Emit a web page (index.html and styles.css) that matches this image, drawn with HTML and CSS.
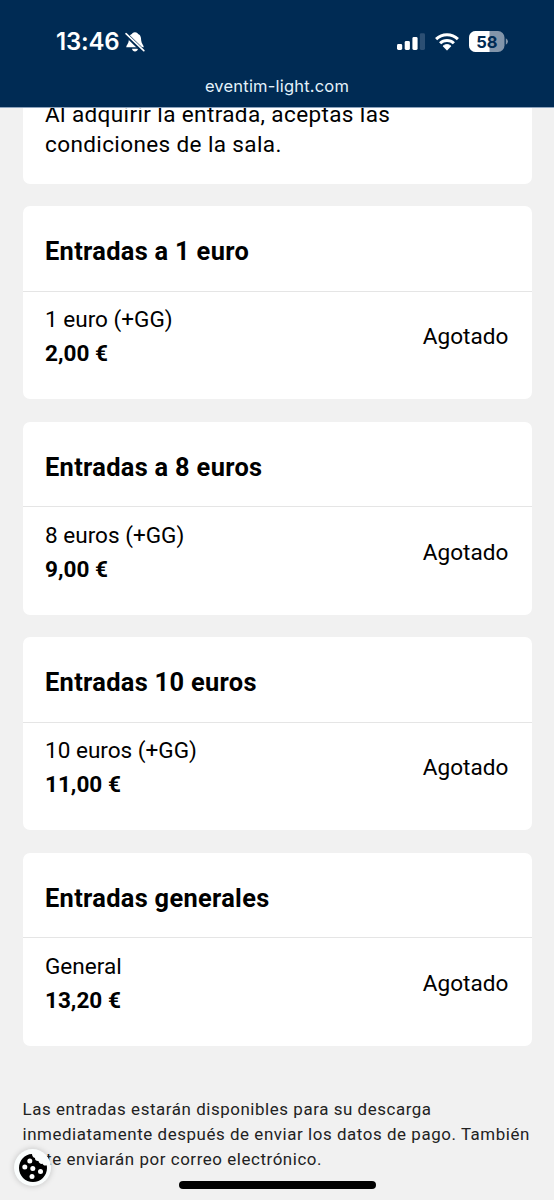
FILE: index.html
```html
<!DOCTYPE html>
<html lang="es">
<head>
<meta charset="utf-8">
<title>Entradas</title>
<link rel="stylesheet" href="styles.css">
</head>
<body>
<div class="screen">
  <header class="browser-bar">
    <div class="status">
      <div class="status-left">
        <span class="clock">13:46</span>
        <svg class="bell" viewBox="0 0 20 22" width="20" height="22">
          <path d="M10 1.2C7.9 1.2 7.2 2.4 6.9 3.1C4.2 4.2 3.9 7 3.8 9.5C3.7 12.5 1.2 14 1.2 16.2H18.8C18.8 14 16.3 12.5 16.2 9.5C16.1 7 15.8 4.2 13.1 3.1C12.8 2.4 12.1 1.2 10 1.2ZM7 17.7H13C12.6 19.5 11.5 20.4 10 20.4S7.4 19.5 7 17.7Z" fill="#fff"/>
          <path d="M1 3.4L18 20" stroke="#002b54" stroke-width="4.2"/>
          <path d="M1 2.7L18.8 19.7" stroke="#fff" stroke-width="1.6" stroke-linecap="round"/>
        </svg>
      </div>
      <div class="status-right">
        <svg width="28" height="18" viewBox="0 0 28 18">
          <g fill="#fff"><rect x="0" y="11" width="5.2" height="6" rx="1.4"/><rect x="7.7" y="8" width="5.2" height="9" rx="1.4"/><rect x="15.4" y="4" width="5.2" height="13" rx="1.4"/></g>
          <rect x="22.8" y="0.3" width="5.2" height="16.7" rx="1.4" fill="#2c4f73"/>
        </svg>
        <svg width="24" height="18" viewBox="0 0 24 18">
          <g fill="none" stroke="#fff" stroke-width="3"><path d="M1.1 6.2C7.2.3 16.8.3 22.9 6.2"/><path d="M5.1 10.3C9 6.5 15 6.5 18.9 10.3"/></g>
          <path d="M8 13.1C10.3 11 13.7 11 16 13.1L12 17.2Z" fill="#fff" stroke="#fff" stroke-width="0.8" stroke-linejoin="round"/>
        </svg>
        <svg width="39" height="21" viewBox="0 0 39 21">
          <defs><clipPath id="battery"><rect width="35.5" height="21" rx="6.5"/></clipPath></defs>
          <g clip-path="url(#battery)"><rect width="36" height="21" fill="#8295aa"/><rect width="20.5" height="21" fill="#fff"/></g>
          <path d="M36.8 7.3Q39 8.5 39 10.5T36.8 13.7Z" fill="#8295aa"/>
          <text class="battery-text" x="17.8" y="16.5" text-anchor="middle">58</text>
        </svg>
      </div>
    </div>
    <div class="address">eventim-light.com</div>
  </header>
  <main class="content">
    <section class="card terms">Al adquirir la entrada, aceptas las condiciones de la sala.</section>
    <section class="card ticket">
      <h2 class="title">Entradas a 1 euro</h2>
      <div class="row"><div><div>1 euro (+GG)</div><div class="price">2,00 €</div></div><span class="state">Agotado</span></div>
    </section>
    <section class="card ticket">
      <h2 class="title">Entradas a 8 euros</h2>
      <div class="row"><div><div>8 euros (+GG)</div><div class="price">9,00 €</div></div><span class="state">Agotado</span></div>
    </section>
    <section class="card ticket">
      <h2 class="title">Entradas 10 euros</h2>
      <div class="row"><div><div>10 euros (+GG)</div><div class="price">11,00 €</div></div><span class="state">Agotado</span></div>
    </section>
    <section class="card ticket">
      <h2 class="title">Entradas generales</h2>
      <div class="row"><div><div>General</div><div class="price">13,20 €</div></div><span class="state">Agotado</span></div>
    </section>
    <p class="note">Las entradas estarán disponibles para su descarga<br>inmediatamente después de enviar los datos de pago. También<br>se te enviarán por correo electrónico.</p>
  </main>
  <div class="cookie">
    <svg width="30" height="30" viewBox="0 0 30 30">
      <path d="M14 1C6.7 1.2 1 7.5 1 15C1 22.8 7.2 29 15 29S29 22.8 29 15C29 13.8 28.9 13 28.6 12.2C26.8 13 25.3 12.4 24.5 10.8C22.5 11.2 20.7 10 20.5 8C18.4 8.3 16.8 7 17 5C15 4.5 14 2.8 14 1Z" fill="#000"/>
      <g fill="#fff"><circle cx="11.8" cy="8" r="2.5"/><circle cx="6.8" cy="14" r="2.5"/><circle cx="14.8" cy="15.5" r="2.5"/><circle cx="22.5" cy="18.5" r="2.5"/><circle cx="14" cy="23.5" r="2.5"/></g>
    </svg>
  </div>
  <div class="home-bar"></div>
</div>
</body>
</html>
```
FILE: styles.css
```css
* { box-sizing: border-box; }
body { margin: 0; background: #f1f1f1; }
.screen {
  position: relative;
  display: flex;
  flex-direction: column;
  width: 554px;
  height: 1200px;
  overflow: hidden;
  background: #f1f1f1;
  color: #000;
  font-family: Roboto, "Liberation Sans", sans-serif;
}
.browser-bar {
  position: relative;
  z-index: 1;
  flex: none;
  height: 108px;
  padding-top: 27px;
  background: #002b54;
  border-bottom: 1px solid #8da3bd;
  color: #fff;
  font-family: Inter, "Liberation Sans", sans-serif;
}
.status {
  display: flex;
  justify-content: space-between;
  align-items: center;
  height: 29px;
  padding: 0 46px 0 56px;
}
.status-left { display: flex; align-items: center; gap: 5px; }
.clock { width: 64px; font-size: 24px; font-weight: 600; line-height: 29px; letter-spacing: -0.2px; white-space: nowrap; }
.bell { display: block; }
.status-right { display: flex; align-items: center; gap: 10px; }
.status-right svg { display: block; }
.battery-text { font: 700 16.5px Inter, "Liberation Sans", sans-serif; fill: #002b54; }
.address { margin-top: 19px; font-size: 16.5px; line-height: 22px; letter-spacing: 0.2px; text-align: center; color: #e4f2fb; }
.content {
  display: flex;
  flex-direction: column;
  gap: 22.5px;
  margin-top: -10px;
  padding: 0 22.5px;
}
.card { background: #fff; border-radius: 7px; }
.terms {
  height: 85.5px;
  padding: 2px 120px 0 22.5px;
  font-size: 22.55px;
  line-height: 30.4px;
  letter-spacing: 0.37px;
}
.ticket { height: 193px; }
.title {
  height: 85.5px;
  margin: 0;
  padding: 0 22.5px;
  border-bottom: 1.4px solid #e5e5e5;
  font-size: 25.4px;
  font-weight: 700;
  line-height: 90px;
  letter-spacing: 0.31px;
}
.row {
  display: flex;
  justify-content: space-between;
  align-items: center;
  padding: 11.8px 23.2px 0 22.5px;
  font-size: 22.55px;
  line-height: 33.8px;
}
.price { font-weight: 700; }
.note {
  margin: 28.5px 0 0;
  font-size: 16.9px;
  line-height: 25.4px;
  letter-spacing: 0.57px;
  color: #222;
  white-space: nowrap;
}
.cookie {
  position: absolute;
  left: 14px;
  top: 1149px;
  display: grid;
  place-items: center;
  width: 37px;
  height: 37px;
  border-radius: 50%;
  background: #fafdfd;
  box-shadow: 0 0 6px rgba(0, 0, 0, 0.2);
}
.home-bar {
  position: absolute;
  left: 179px;
  top: 1181px;
  width: 197px;
  height: 8px;
  border-radius: 4px;
  background: #000;
}
```
